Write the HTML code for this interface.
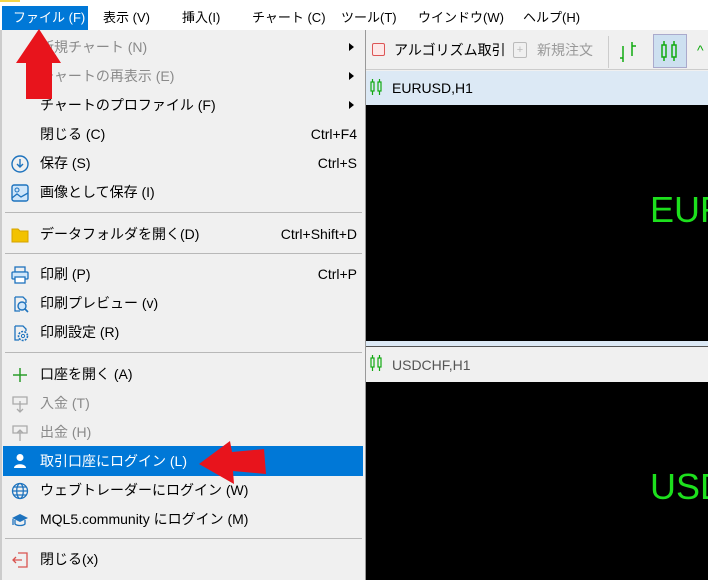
<!DOCTYPE html>
<html><head><meta charset="utf-8"><style>
*{margin:0;padding:0;box-sizing:border-box}
body{width:708px;height:580px;overflow:hidden;background:#f0f0f0;position:relative;font-family:"Liberation Sans","Noto Sans CJK JP",sans-serif;font-size:14px;color:#000}
.abs{position:absolute}
.mb{top:6px;height:24px;line-height:24px;white-space:nowrap;font-size:13px}
.it{position:absolute;left:3px;width:360px;height:29px;line-height:29px;white-space:nowrap}
.it .t{position:absolute;left:37px}
.it .k{position:absolute;right:6px}
.it .ic{position:absolute;left:8px;top:6px;width:18px;height:18px}
.dis{color:#8a8a8a}
.sep{position:absolute;left:5px;width:357px;height:1px;background:#b8b8b8}
.arr{position:absolute;right:9px;top:10px;width:0;height:0;border-left:5px solid #000;border-top:4px solid transparent;border-bottom:4px solid transparent}
</style></head><body>
<div class="abs" style="left:0;top:0;width:708px;height:30px;background:#fff"></div>
<div class="abs" style="left:0;top:0;width:20px;height:2px;background:#f5d64a"></div>
<div class="abs" style="left:2px;top:6px;width:86px;height:24px;background:#0078d7"></div>
<div class="abs mb" style="left:13px;color:#fff">ファイル (F)</div>
<div class="abs mb" style="left:103px">表示 (V)</div>
<div class="abs mb" style="left:182px">挿入(I)</div>
<div class="abs mb" style="left:252px">チャート (C)</div>
<div class="abs mb" style="left:341px">ツール(T)</div>
<div class="abs mb" style="left:418px">ウインドウ(W)</div>
<div class="abs mb" style="left:523px">ヘルプ(H)</div>
<!-- right side -->
<div class="abs" style="left:366px;top:34px;width:342px;height:36px;background:#f0f0f0;border-bottom:1px solid #ccc"></div>
<div class="abs" style="left:372px;top:43px;width:13px;height:13px;border:1.5px solid #d55;background:#fde8e8;border-radius:2px"></div>
<div class="abs" style="left:394px;top:40px;line-height:20px">アルゴリズム取引</div>
<div class="abs" style="left:513px;top:42px;width:14px;height:16px;border:1px solid #bbb;border-radius:2px;color:#bbb;font-size:11px;text-align:center;line-height:14px">+</div>
<div class="abs" style="left:537px;top:40px;line-height:20px;color:#999">新規注文</div>
<div class="abs" style="left:608px;top:36px;width:1px;height:32px;background:#ccc"></div>
<svg class="abs" style="left:618px;top:40px" width="24" height="24"><path d="M5 6v16M2 18h3M14 2v14M14 6h4" stroke="#1a1" stroke-width="1.5" fill="none"/></svg>
<div class="abs" style="left:653px;top:34px;width:34px;height:34px;background:#cde0f0;border:1px solid #aac"></div>
<svg class="abs" style="left:660px;top:40px" width="20" height="22"><g stroke="#1a1" fill="none" stroke-width="1.5"><rect x="2" y="5" width="4" height="12"/><line x1="4" y1="1" x2="4" y2="5"/><line x1="4" y1="17" x2="4" y2="21"/><rect x="12" y="5" width="4" height="12"/><line x1="14" y1="1" x2="14" y2="5"/><line x1="14" y1="17" x2="14" y2="21"/></g></svg>
<div class="abs" style="left:697px;top:40px;color:#1a1;line-height:20px">^</div>
<div class="abs" style="left:366px;top:71px;width:342px;height:34px;background:#dce9f5"></div>
<svg class="abs" style="left:370px;top:79px" width="14" height="16"><g stroke="#1a1" fill="none" stroke-width="1.2"><rect x="1" y="3" width="3" height="9"/><line x1="2.5" y1="0" x2="2.5" y2="3"/><line x1="2.5" y1="12" x2="2.5" y2="16"/><rect x="8" y="3" width="3" height="9"/><line x1="9.5" y1="0" x2="9.5" y2="3"/><line x1="9.5" y1="12" x2="9.5" y2="16"/></g></svg>
<div class="abs" style="left:392px;top:78px;line-height:20px">EURUSD,H1</div>
<div class="abs" style="left:366px;top:105px;width:342px;height:236px;background:#000"></div>
<div class="abs" style="left:650px;top:188px;color:#1de01d;font-size:36px;line-height:44px">EUR</div>
<div class="abs" style="left:366px;top:341px;width:342px;height:5px;background:#dce9f5"></div>
<div class="abs" style="left:366px;top:346px;width:342px;height:1px;background:#555"></div>
<div class="abs" style="left:366px;top:347px;width:342px;height:35px;background:#f0f0f0"></div>
<svg class="abs" style="left:370px;top:355px" width="14" height="16"><g stroke="#1a1" fill="none" stroke-width="1.2"><rect x="1" y="3" width="3" height="9"/><line x1="2.5" y1="0" x2="2.5" y2="3"/><line x1="2.5" y1="12" x2="2.5" y2="16"/><rect x="8" y="3" width="3" height="9"/><line x1="9.5" y1="0" x2="9.5" y2="3"/><line x1="9.5" y1="12" x2="9.5" y2="16"/></g></svg>
<div class="abs" style="left:392px;top:355px;line-height:20px;color:#555">USDCHF,H1</div>
<div class="abs" style="left:366px;top:382px;width:342px;height:198px;background:#000"></div>
<div class="abs" style="left:650px;top:465px;color:#1de01d;font-size:36px;line-height:44px">USD</div>
<!-- menu -->
<div class="abs" style="left:0;top:30px;width:366px;height:550px;background:#f0f0f0;border-left:2px solid #ccc;border-right:1px solid #999"></div>
<div class="it dis" style="top:33px"><span class="t">新規チャート (N)</span><span class="arr"></span></div>
<div class="it dis" style="top:62px"><span class="t">チャートの再表示 (E)</span><span class="arr"></span></div>
<div class="it" style="top:91px"><span class="t">チャートのプロファイル (F)</span><span class="arr"></span></div>
<div class="it" style="top:120px"><span class="t">閉じる (C)</span><span class="k">Ctrl+F4</span></div>
<div class="it" style="top:149px"><svg class="ic" viewBox="0 0 18 18"><circle cx="9" cy="9" r="8" fill="none" stroke="#1e73be" stroke-width="1.4"/><path d="M9 4v8M6 9l3 3 3-3" fill="none" stroke="#1e73be" stroke-width="1.4"/></svg><span class="t">保存 (S)</span><span class="k">Ctrl+S</span></div>
<div class="it" style="top:178px"><svg class="ic" viewBox="0 0 18 18"><rect x="1" y="1" width="16" height="16" rx="2" fill="#cfe6fa" stroke="#1e73be" stroke-width="1.4"/><circle cx="6" cy="6" r="2" fill="none" stroke="#1e73be"/><path d="M1 14l5-4 4 3 7-4" fill="none" stroke="#1e73be" stroke-width="1.3"/></svg><span class="t">画像として保存 (I)</span></div>
<div class="sep" style="top:212px"></div>
<div class="it" style="top:220px"><svg class="ic" viewBox="0 0 18 18"><path d="M1 3h6l2 2h8v11H1z" fill="#f2c200" stroke="#d6a300"/></svg><span class="t">データフォルダを開く(D)</span><span class="k">Ctrl+Shift+D</span></div>
<div class="sep" style="top:253px"></div>
<div class="it" style="top:260px"><svg class="ic" viewBox="0 0 18 18"><rect x="4" y="1" width="10" height="5" fill="none" stroke="#1e73be" stroke-width="1.3"/><rect x="1" y="6" width="16" height="7" rx="1" fill="#cfe6fa" stroke="#1e73be" stroke-width="1.3"/><rect x="4" y="11" width="10" height="6" fill="#fff" stroke="#1e73be" stroke-width="1.3"/></svg><span class="t">印刷 (P)</span><span class="k">Ctrl+P</span></div>
<div class="it" style="top:289px"><svg class="ic" viewBox="0 0 18 18"><path d="M4 2h8l3 3v3M4 2v14h5" fill="none" stroke="#1e73be" stroke-width="1.3"/><circle cx="11" cy="11" r="4" fill="#cfe6fa" stroke="#1e73be" stroke-width="1.4"/><path d="M14 14l3 3" stroke="#1e73be" stroke-width="1.6"/></svg><span class="t">印刷プレビュー (v)</span></div>
<div class="it" style="top:318px"><svg class="ic" viewBox="0 0 18 18"><path d="M4 2h8l3 3v2M4 2v14h4" fill="none" stroke="#1e73be" stroke-width="1.3"/><circle cx="12" cy="12" r="4.5" fill="none" stroke="#1e73be" stroke-width="1.6" stroke-dasharray="2 1.2"/><circle cx="12" cy="12" r="1.6" fill="none" stroke="#1e73be"/></svg><span class="t">印刷設定 (R)</span></div>
<div class="sep" style="top:352px"></div>
<div class="it" style="top:360px"><svg class="ic" viewBox="0 0 18 18"><path d="M9 2v14M2 9h14" stroke="#2a9d2a" stroke-width="1.5"/></svg><span class="t">口座を開く (A)</span></div>
<div class="it dis" style="top:389px"><svg class="ic" viewBox="0 0 18 18"><path d="M2 2h14v7H2zM9 6v11M6 14l3 3 3-3" fill="none" stroke="#aaa" stroke-width="1.3"/></svg><span class="t">入金 (T)</span></div>
<div class="it dis" style="top:418px"><svg class="ic" viewBox="0 0 18 18"><path d="M2 2h14v7H2zM9 17V6M6 9l3-3 3 3" fill="none" stroke="#aaa" stroke-width="1.3"/></svg><span class="t">出金 (H)</span></div>
<div class="it" style="top:446px;background:#0078d7;color:#fff;height:30px;line-height:30px"><svg class="ic" viewBox="0 0 18 18"><circle cx="9" cy="5.5" r="3.5" fill="#fff"/><path d="M3 16c0-5 12-5 12 0z" fill="#fff"/></svg><span class="t">取引口座にログイン (L)</span></div>
<div class="it" style="top:476px"><svg class="ic" viewBox="0 0 18 18"><g fill="none" stroke="#1e73be" stroke-width="1.3"><circle cx="9" cy="9" r="7.5"/><ellipse cx="9" cy="9" rx="3.3" ry="7.5"/><path d="M1.5 9h15M3 5h12M3 13h12"/></g></svg><span class="t">ウェブトレーダーにログイン (W)</span></div>
<div class="it" style="top:505px"><svg class="ic" viewBox="0 0 18 18"><path d="M1 7l8-4 8 4-8 4z" fill="#1e73be"/><path d="M4 9v4c2 2 8 2 10 0V9M2 8v6" fill="none" stroke="#1e73be" stroke-width="1.3"/></svg><span class="t">MQL5.community にログイン (M)</span></div>
<div class="sep" style="top:538px"></div>
<div class="it" style="top:545px"><svg class="ic" viewBox="0 0 18 18"><path d="M7 2h9v14H7M11 9H2M5 6L2 9l3 3" fill="none" stroke="#d9534f" stroke-width="1.3"/></svg><span class="t">閉じる(x)</span></div>
<!-- red arrows -->
<svg class="abs" style="left:0;top:0" width="708" height="580"><polygon points="39,29 61,63 52,63 52,99 26,99 26,63 16,63" fill="#e8141c"/><polygon points="199,464 230,441 232,452 264,449 266,474 233,471 234,484" fill="#e8141c"/></svg>
</body></html>
